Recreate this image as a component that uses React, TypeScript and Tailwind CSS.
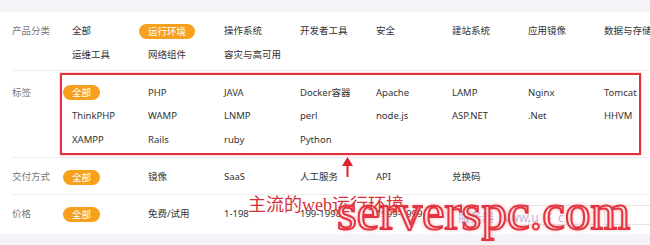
import React from "react";

type Row = { label: string; items: string[][]; rowH: string; pad: string };

const sections: Row[] = [
  {
    label: "产品分类",
    items: [
      ["全部", "*运行环境", "操作系统", "开发者工具", "安全", "建站系统", "应用镜像", "数据与存储"],
      ["运维工具", "网络组件", "容灾与高可用"],
    ],
    rowH: "auto-rows-[24px]",
    pad: "pt-[7px] pb-[3px]",
  },
  {
    label: "标签",
    items: [
      ["*全部", "PHP", "JAVA", "Docker容器", "Apache", "LAMP", "Nginx", "Tomcat"],
      ["ThinkPHP", "WAMP", "LNMP", "perl", "node.js", "ASP.NET", ".Net", "HHVM"],
      ["XAMPP", "Rails", "ruby", "Python"],
    ],
    rowH: "auto-rows-[23.5px]",
    pad: "pt-[10px] pb-[5px]",
  },
  {
    label: "交付方式",
    items: [["*全部", "镜像", "SaaS", "人工服务", "API", "兑换码"]],
    rowH: "auto-rows-[24px]",
    pad: "pt-[8px] pb-[4px]",
  },
  {
    label: "价格",
    items: [["*全部", "免费/试用", "1-198", "199-1998", "1999-4999", "", "#box", "#box"]],
    rowH: "auto-rows-[24px]",
    pad: "pt-[8px] pb-[7px]",
  },
];

const Item = ({ text }: { text: string }) => {
  if (text === "#box") {
    return (
      <div className="h-full flex items-center pl-[9px]">
        <div className="w-[109px] h-[20px] border border-[#e4e4e4] bg-white" />
      </div>
    );
  }
  const active = text.startsWith("*");
  const label = active ? text.slice(1) : text;
  return (
    <div className="h-full flex items-center">
      <span
        className={
          active
            ? "px-[9px] h-[15px] leading-[15px] rounded-full bg-[#f6a01d] text-white whitespace-nowrap"
            : "px-[9px] whitespace-nowrap text-[#333]"
        }
      >
        {label}
      </span>
    </div>
  );
};

export default function App() {
  return (
    <div
      className="relative w-[650px] h-[245px] overflow-hidden bg-[#f3f4f8] text-[9.5px]"
      style={{ fontFamily: '"Noto Sans", "Noto Sans CJK SC", sans-serif' }}
    >
      <div className="h-[12px]" />
      <div className="bg-white">
        {sections.map((s, i) => (
          <div
            key={s.label}
            className={`ml-[12px] flex ${s.pad} ${i < sections.length - 1 ? "border-b border-[#eeeeee]" : ""}`}
          >
            <div className="w-[51px] shrink-0 h-[24px] flex items-center whitespace-nowrap text-[#777]">
              {s.label}
            </div>
            <div className={`grid shrink-0 grid-cols-[repeat(8,76px)] ${s.rowH}`}>
              {s.items.flatMap((row, r) =>
                Array.from({ length: 8 }).map((_, c) => (
                  <div key={`${r}-${c}`}>{row[c] ? <Item text={row[c]} /> : null}</div>
                ))
              )}
            </div>
          </div>
        ))}
      </div>

      {/* faint watermark inside price box */}
      <div className="absolute left-[458px] top-[209px] text-[12px] text-[#c2b2dc] whitespace-nowrap">
        服务器 &nbsp;www.u&nbsp;&nbsp;¥&nbsp; c
      </div>

      {/* annotation overlay */}
      <div className="absolute left-[60px] top-[73px] w-[581px] h-[82px] border-2 border-[#e2323d] shadow-[0_0_2px_rgba(226,50,61,0.5)]" />
      <svg className="absolute left-[341px] top-[156px]" width="13" height="22" viewBox="0 0 13 22">
        <path d="M6.5 1 L12 10 L1 10 Z" fill="#e0202a" />
        <rect x="5.5" y="9" width="2" height="12" fill="#e0202a" />
      </svg>
      <div
        className="absolute left-[248px] top-[194px] text-[18px] leading-[22px] text-[#d6303a] whitespace-nowrap"
        style={{ fontFamily: '"Liberation Serif", "Noto Sans CJK SC", serif' }}
      >
        主流的web运行环境
      </div>
      <div
        className="absolute left-[337px] top-[184px] text-[51px] leading-[56px] text-[#fcdfe2] whitespace-nowrap [-webkit-text-stroke:2px_#e3343f] [text-shadow:0_0_4px_rgba(240,80,90,0.7)]"
        style={{ fontFamily: '"Liberation Serif", serif' }}
      >
        serverspc.com
      </div>
    </div>
  );
}
